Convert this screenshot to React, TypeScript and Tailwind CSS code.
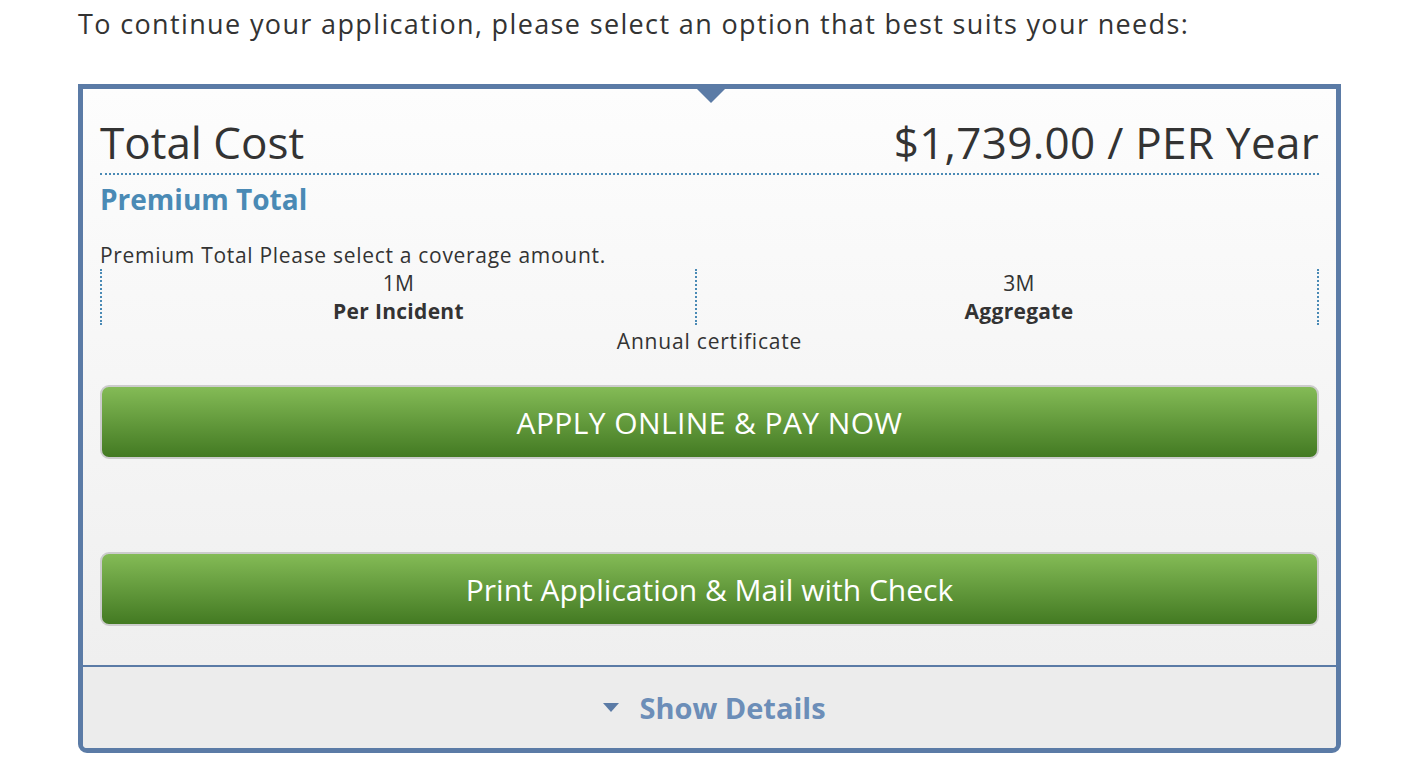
// Pantalla de selección de opción de pago para la solicitud
export default function App() {
  const font = { fontFamily: "'Open Sans', Lato, sans-serif" };
  return (
    <div className="min-h-screen bg-white text-[#333]" style={font}>
      <div className="pl-[78px] pr-[85px] pt-[6px]">
        <p className="text-[27px] leading-[36px] tracking-[1.36px]">
          To continue your application, please select an option that best suits your needs:
        </p>

        <div className="relative mt-[42px] overflow-hidden rounded-b-[9px] border-[5px] border-[#5b7ba6] bg-gradient-to-b from-[#fdfdfd] to-[#ededed]">
          {/* pestaña triangular */}
          <div className="absolute left-1/2 top-0 -ml-[13px] h-0 w-0 border-l-[14px] border-r-[14px] border-t-[14px] border-l-transparent border-r-transparent border-t-[#5b7ba6]" />

          <div className="px-[17px] pt-[26px]">
            <div className="flex items-end justify-between border-b-2 border-dotted border-[#4a8ab5] pb-[4px]">
              <span className="text-[44px] leading-[54px]">Total Cost</span>
              <span className="text-[44px] leading-[54px] tracking-[0.3px]">$1,739.00 / PER Year</span>
            </div>
            <h2 className="mt-[6px] text-[28px] font-bold leading-[36px] text-[#4a8ab5]">Premium Total</h2>

            <p className="mt-[26px] text-[21px] leading-[24px] tracking-[0.7px]">Premium Total Please select a coverage amount.</p>
            <div className="mt-[2px] grid grid-cols-[595px_1fr] border-r-2 border-dotted border-[#4a8ab5] text-[21px] leading-[28px] tracking-[0.3px]">
              <div className="border-l-2 border-dotted border-[#4a8ab5] text-center">
                <div>1M</div>
                <div className="font-bold">Per Incident</div>
              </div>
              <div className="border-l-2 border-dotted border-[#4a8ab5] pl-[24px] text-center">
                <div>3M</div>
                <div className="font-bold">Aggregate</div>
              </div>
            </div>
            <p className="text-center text-[21px] leading-[32px] tracking-[0.8px]">Annual certificate</p>

            <button className="mt-[28px] flex h-[74px] w-full items-center justify-center rounded-[9px] border-2 border-[#cccccc] bg-gradient-to-b from-[#84bb56] to-[#437a22] text-[30px] tracking-[0.4px] text-white">
              APPLY ONLINE &amp; PAY NOW
            </button>

            <button className="mt-[93px] flex h-[74px] w-full items-center justify-center rounded-[9px] border-2 border-[#cccccc] bg-gradient-to-b from-[#84bb56] to-[#437a22] text-[30px] text-white">
              Print Application &amp; Mail with Check
            </button>
          </div>

          <div className="mt-[39px] flex h-[83px] items-center justify-center gap-[20px] border-t-2 border-[#5b7ba6] bg-[#ececec] pl-[10px] text-[29px] font-bold text-[#6c8eb8]">
            <svg width="16" height="9" viewBox="0 0 16 9">
              <path d="M0 0h16L8 9z" fill="#5b7ba6" />
            </svg>
            <span>Show Details</span>
          </div>
        </div>
      </div>
    </div>
  );
}
